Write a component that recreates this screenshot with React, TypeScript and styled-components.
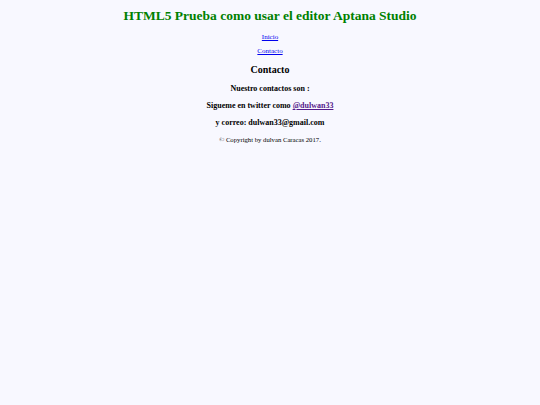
import styled, { createGlobalStyle } from 'styled-components';

const Global = createGlobalStyle`
    html, body {
        margin: 0;
        background: #f8f8ff;
    }
`;

const Page = styled.div`
    display: flex;
    flex-direction: column;
    align-items: center;
    padding-top: 8px;
    text-align: center;
    font-family: 'Liberation Serif', Tinos, 'Times New Roman', serif;
    color: #000;
`;

const Title = styled.h1`
    margin: 0;
    font-family: inherit;
    font-size: 13.5px;
    line-height: 16px;
    font-weight: 700;
    color: #008000;
`;

const Nav = styled.nav`
    display: flex;
    flex-direction: column;
    align-items: center;
    gap: 6px;
    margin-top: 9px;
`;

const NavLink = styled.a`
    font-size: 7px;
    line-height: 8px;
    color: #0000ee;
`;

const Heading = styled.h2`
    margin: 9px 0 0;
    font-family: inherit;
    font-size: 10px;
    line-height: 12px;
    font-weight: 700;
`;

const Line = styled.p`
    margin: 8px 0 0;
    font-size: 8px;
    line-height: 9px;
    font-weight: 700;
`;

const Twitter = styled.a`
    color: #551a8b;
`;

const Footer = styled.footer`
    margin-top: 9px;
    font-size: 6.7px;
    line-height: 8px;
`;

export default function App() {
    return (
        <>
            <Global />
            <Page>
                <Title>HTML5 Prueba como usar el editor Aptana Studio</Title>
                <Nav>
                    <NavLink href="#">Inicio</NavLink>
                    <NavLink href="#">Contacto</NavLink>
                </Nav>
                <Heading>Contacto</Heading>
                <Line>Nuestro contactos son :</Line>
                <Line>
                    Sigueme en twitter como <Twitter href="#">@dulwan33</Twitter>
                </Line>
                <Line>y correo: dulwan33@gmail.com</Line>
                <Footer>© Copyright by dulvan Caracas 2017.</Footer>
            </Page>
        </>
    );
}
